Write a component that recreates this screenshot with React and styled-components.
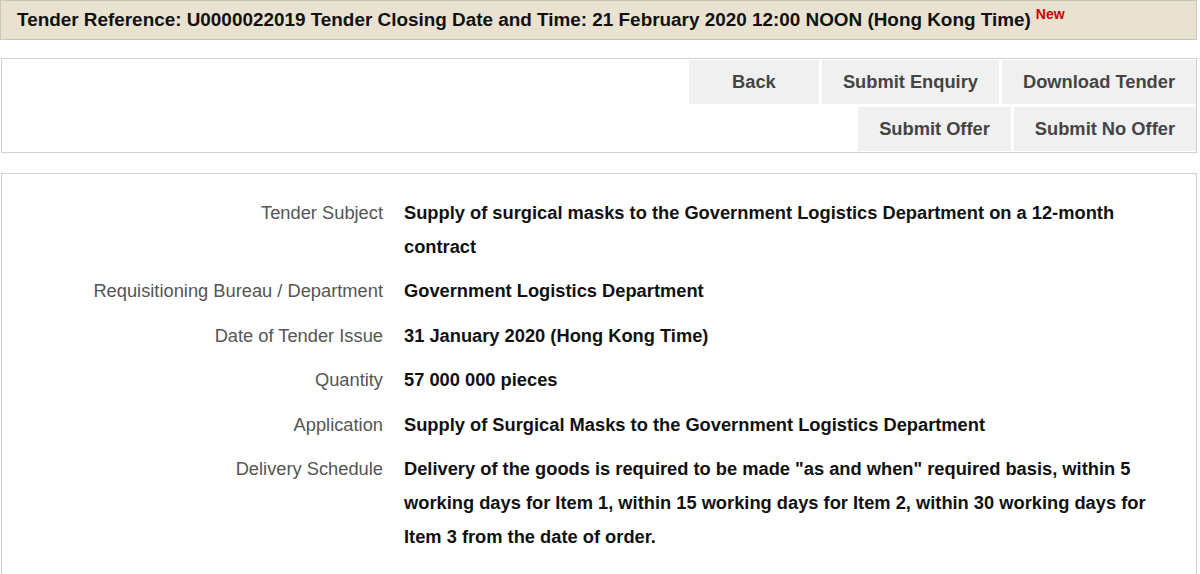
import styled, { createGlobalStyle } from "styled-components";

const Global = createGlobalStyle`
  body {
    margin: 0;
    background: #fff;
    font-family: "Liberation Sans", Arial, sans-serif;
  }
`;

const Page = styled.div`
  width: 1197px;
  padding-top: 1px;
`;

const TitleBar = styled.div`
  background: #e9e2d0;
  border: 1px solid #c9c6bd;
  height: 38px;
  display: flex;
  align-items: center;
  padding: 0 16px;
  font-size: 18.9px;
  font-weight: bold;
  color: #111;
  margin-top: -1px;
`;

const NewTag = styled.sup`
  color: #cc0000;
  font-size: 14px;
  margin-left: 5px;
  position: relative;
  top: -6px;
`;

const Panel = styled.div`
  border: 1px solid #cfcfcf;
  margin-top: ${(p) => p.$gap}px;
  margin-left: 1px;
  background: #fff;
`;

const Actions = styled.div`
  display: flex;
  flex-direction: column;
  align-items: flex-end;
  gap: 3px;
  padding: 1px 0 1px 0;
`;

const ActionRow = styled.div`
  display: flex;
  gap: 3px;
`;

const Button = styled.button`
  min-width: 130px;
  height: 44px;
  padding: 0 21px;
  border: none;
  background: #f0f0f0;
  color: #444;
  font-family: inherit;
  font-size: 18.3px;
  font-weight: bold;
`;

const Details = styled.dl`
  display: grid;
  grid-template-columns: 381px 770px;
  column-gap: 21px;
  row-gap: 10.4px;
  margin: 0;
  padding: 22px 0 40px;
  font-size: 18.3px;
  line-height: 34px;
`;

const Label = styled.dt`
  text-align: right;
  color: #555;
`;

const Value = styled.dd`
  margin: 0;
  font-weight: bold;
  color: #111;
`;

const rows = [
  ["Tender Subject", "Supply of surgical masks to the Government Logistics Department on a 12-month contract"],
  ["Requisitioning Bureau / Department", "Government Logistics Department"],
  ["Date of Tender Issue", "31 January 2020 (Hong Kong Time)"],
  ["Quantity", "57 000 000 pieces"],
  ["Application", "Supply of Surgical Masks to the Government Logistics Department"],
  [
    "Delivery Schedule",
    'Delivery of the goods is required to be made "as and when" required basis, within 5 working days for Item 1, within 15 working days for Item 2, within 30 working days for Item 3 from the date of order.',
  ],
];

export default function App() {
  return (
    <Page>
      <Global />
      <TitleBar>
        Tender Reference: U0000022019 Tender Closing Date and Time: 21 February 2020 12:00 NOON (Hong Kong Time)
        <NewTag>New</NewTag>
      </TitleBar>
      <Panel $gap={18}>
        <Actions>
          <ActionRow>
            <Button>Back</Button>
            <Button>Submit Enquiry</Button>
            <Button>Download Tender</Button>
          </ActionRow>
          <ActionRow>
            <Button>Submit Offer</Button>
            <Button>Submit No Offer</Button>
          </ActionRow>
        </Actions>
      </Panel>
      <Panel $gap={20}>
        <Details>
          {rows.map(([label, value]) => (
            <>
              <Label key={label}>{label}</Label>
              <Value>{value}</Value>
            </>
          ))}
        </Details>
      </Panel>
    </Page>
  );
}
